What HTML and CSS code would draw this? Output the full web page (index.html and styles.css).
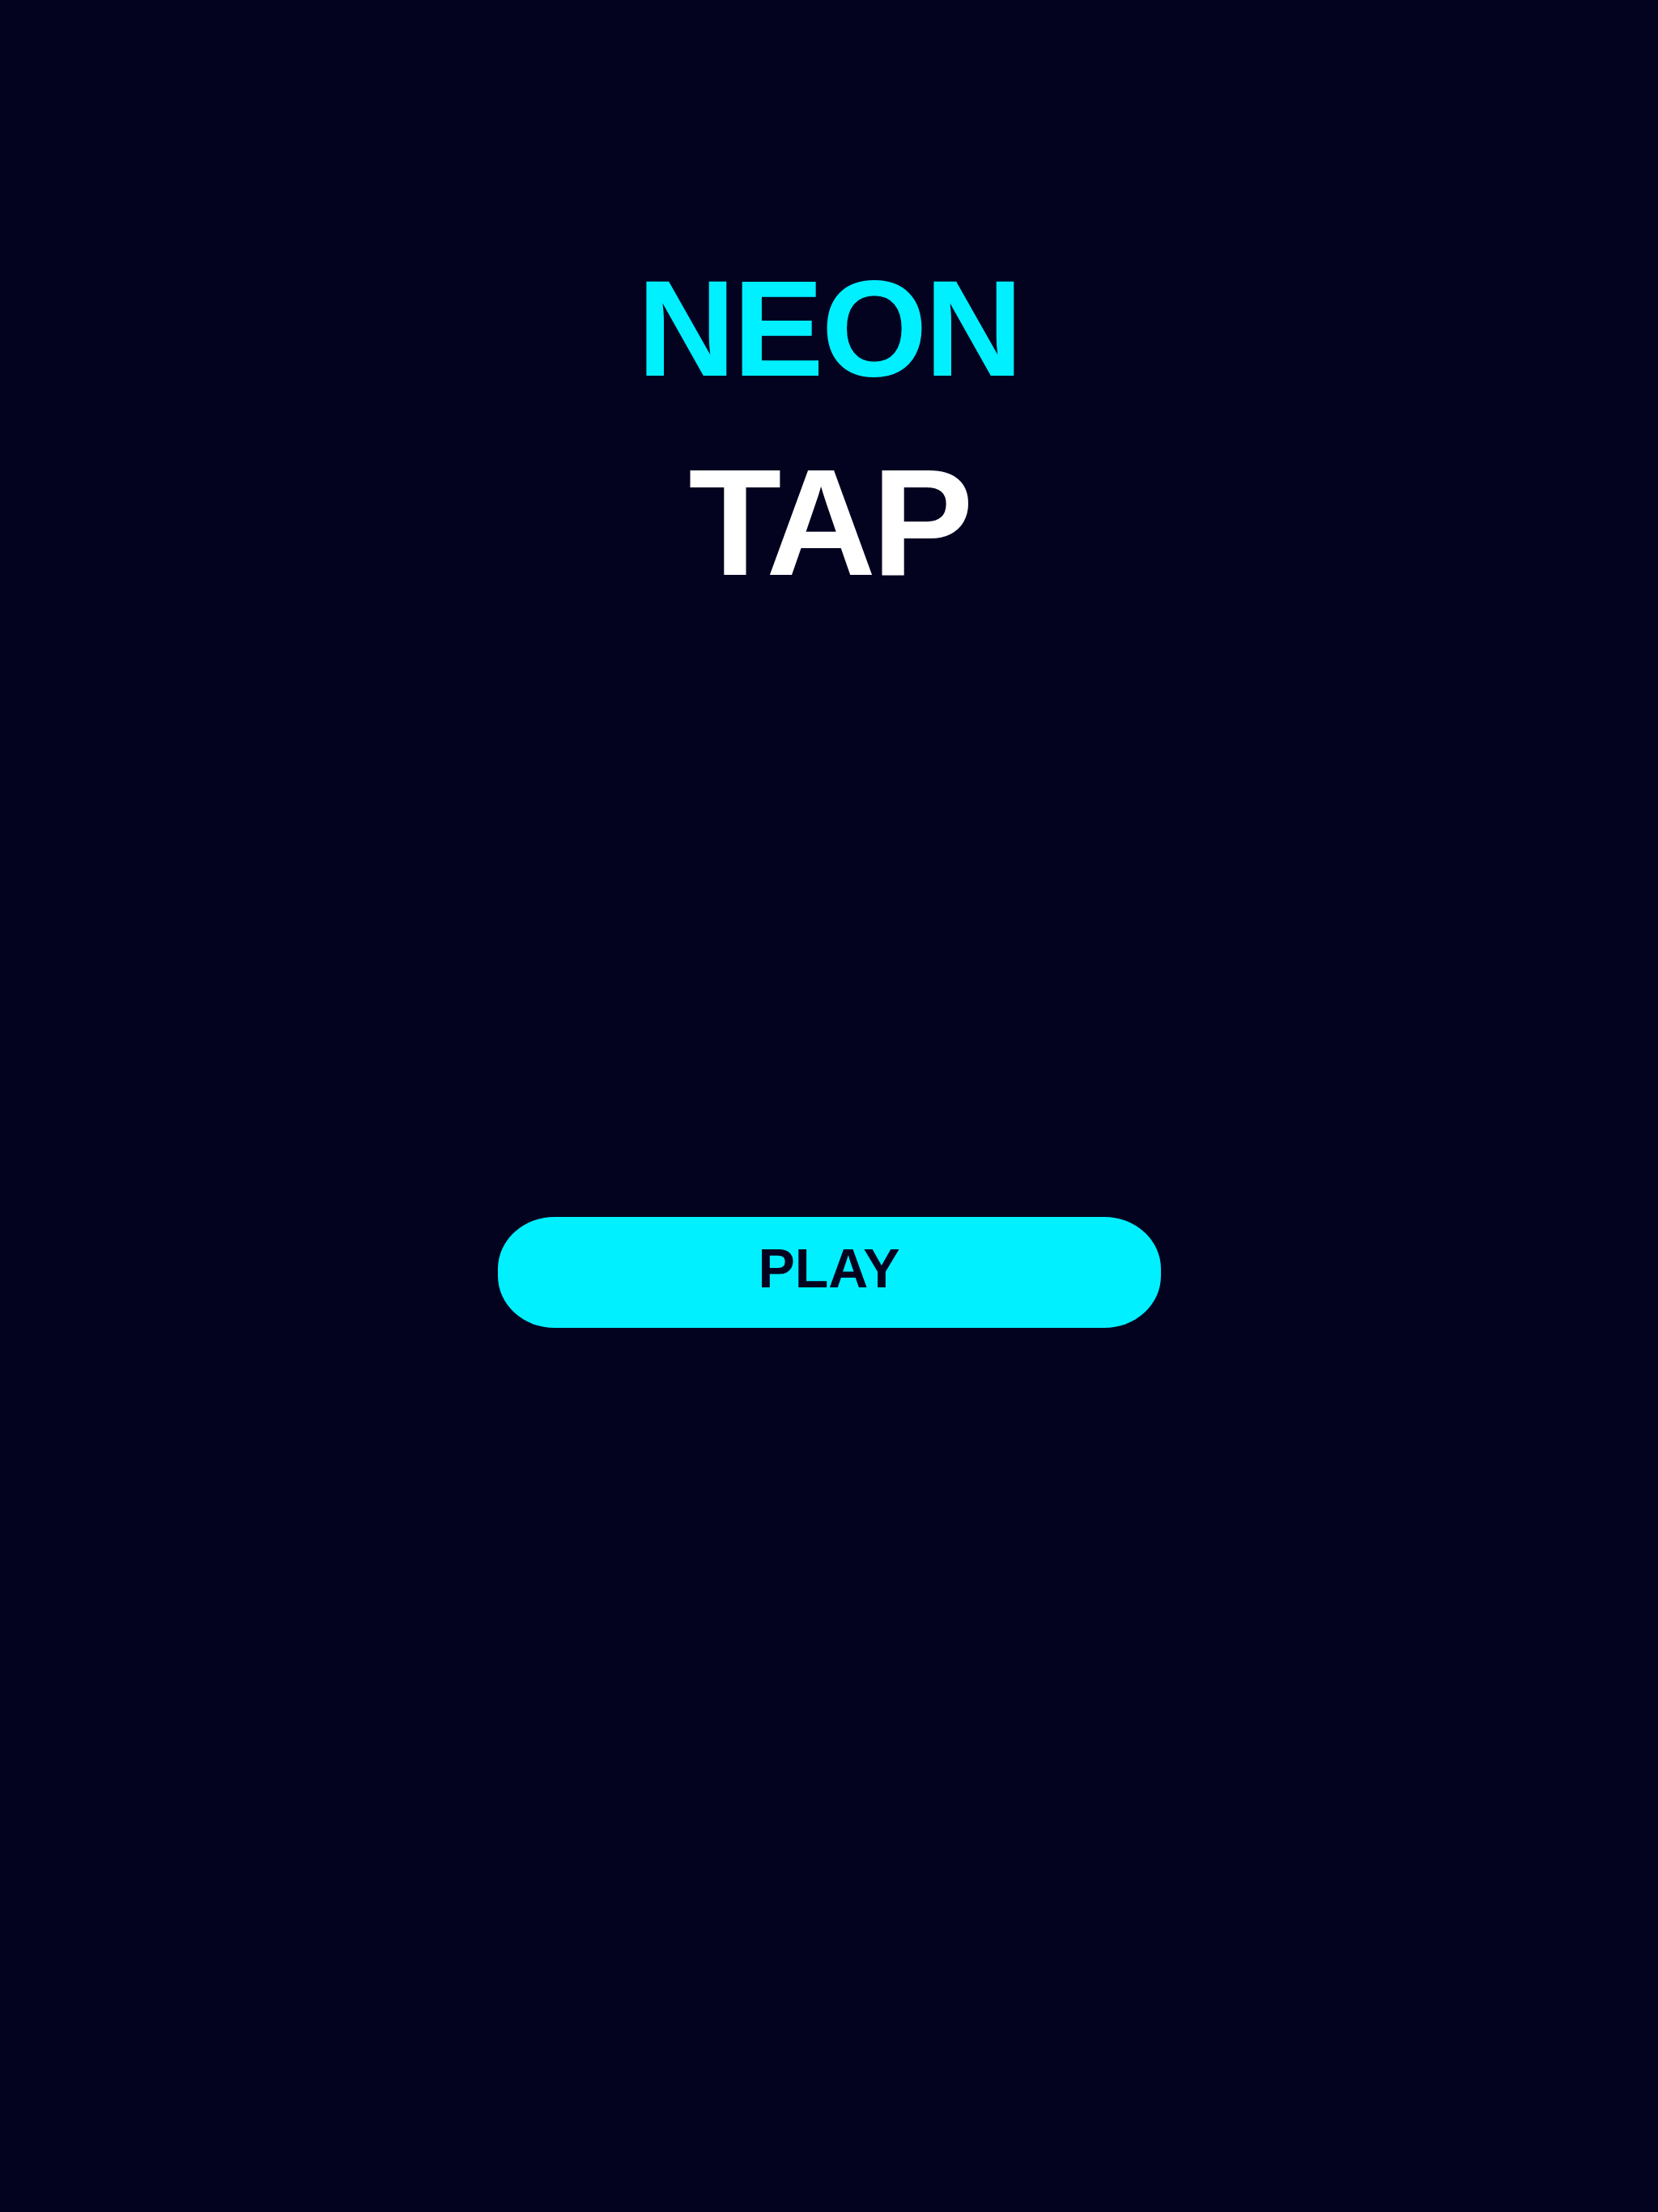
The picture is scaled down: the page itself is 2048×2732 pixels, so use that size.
FILE: index.html
```html
<!DOCTYPE html>
<html lang="en">
<head>
<meta charset="utf-8">
<title>Neon Tap</title>
<link rel="stylesheet" href="styles.css">
</head>
<body>
  <main class="screen">
    <h1 class="title">
      <span class="title-neon">NEON</span>
      <span class="title-tap">TAP</span>
    </h1>
    <button class="play-btn" type="button">PLAY</button>
  </main>
</body>
</html>
```

FILE: styles.css
```css
html, body {
  margin: 0;
  padding: 0;
  background: #030320;
}

body {
  min-height: 2732px;
  font-family: "Liberation Sans", Arial, Helvetica, sans-serif;
}

.screen {
  display: flex;
  flex-direction: column;
  align-items: center;
  padding-top: 322px;
}

.title {
  display: flex;
  flex-direction: column;
  align-items: center;
  gap: 61px;
  margin: 0;
  font-weight: 700;
}

.title-neon {
  font-size: 168px;
  line-height: 1;
  letter-spacing: -3px;
  color: #00f0ff;
}

.title-tap {
  font-size: 188px;
  line-height: 1;
  letter-spacing: -5px;
  color: #ffffff;
}

.play-btn {
  margin-top: 764px;
  width: 819px;
  height: 137px;
  padding: 29px 0 40px;
  border: none;
  border-radius: 70px / 64px;
  background: #00f0ff;
  color: #030320;
  font-family: inherit;
  font-weight: 700;
  font-size: 68px;
  line-height: 1;
  box-sizing: border-box;
  cursor: pointer;
}
```
